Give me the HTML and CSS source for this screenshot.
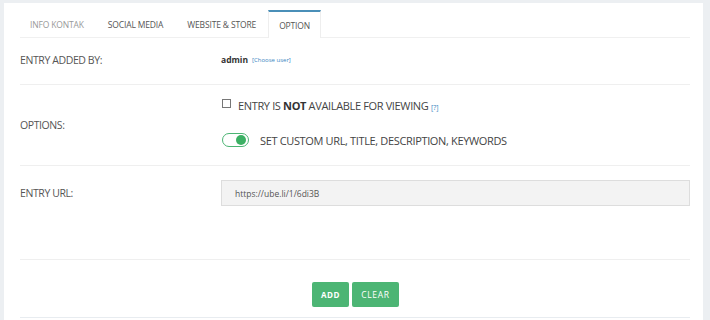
FILE: index.html
```html
<!DOCTYPE html>
<html>
<head>
<meta charset="utf-8">
<link rel="stylesheet" href="styles.css">
</head>
<body>
<div class="panel">
  <div class="tabs">
    <div class="tab muted">INFO KONTAK</div>
    <div class="tab">SOCIAL MEDIA</div>
    <div class="tab">WEBSITE &amp; STORE</div>
    <div class="tab active">OPTION</div>
  </div>
  <div class="row row-by">
    <div class="label">ENTRY ADDED BY:</div>
    <div class="value"><span class="admin">admin</span> <a class="choose">[Choose user]</a></div>
  </div>
  <div class="row row-opts">
    <div class="label">OPTIONS:</div>
    <div class="value opts">
      <div class="opt"><span class="box"></span><span>ENTRY IS <b>NOT</b> AVAILABLE FOR VIEWING <a class="help">[?]</a></span></div>
      <div class="opt"><span class="toggle"><span class="knob"></span></span><span>SET CUSTOM URL, TITLE, DESCRIPTION, KEYWORDS</span></div>
    </div>
  </div>
  <div class="row row-url">
    <div class="label">ENTRY URL:</div>
    <div class="value"><div class="input">https://ube.li/1/6di3B</div></div>
  </div>
  <div class="actions">
    <button class="btn add">ADD</button>
    <button class="btn clear">CLEAR</button>
  </div>
</div>
</body>
</html>
```
FILE: styles.css
```css
html, body { margin: 0; padding: 0; }
body {
  background: #eceff2;
  font-family: "Open Sans", "Liberation Sans", sans-serif;
  color: #555;
  width: 710px;
  height: 320px;
  overflow: hidden;
}
.panel {
  margin: 3px 7px 0 4px;
  background: #fff;
  padding: 7px 13px 0 16px;
  height: 320px;
  box-sizing: border-box;
}
.tabs {
  display: flex;
  height: 28px;
  border-bottom: 1px solid #f0f0f0;
  box-sizing: border-box;
}
.tab {
  font-size: 8.5px;
  letter-spacing: -0.15px;
  color: #555;
  padding: 0 12px;
  display: flex;
  align-items: center;
  box-sizing: border-box;
  border-top: 2px solid transparent;
}
.tab:first-child { padding-left: 10px; padding-right: 12px; }
.tab.muted { color: #999; }
.tab.active {
  border-top: 2px solid #4a8fb8;
  border-left: 1px solid #eee;
  border-right: 1px solid #eee;
  margin-bottom: -1px;
  background: #fff;
  padding: 0 10px;
}
.row {
  display: flex;
  border-bottom: 1px solid #efefef;
}
.label {
  width: 201px;
  font-size: 10.5px;
  color: #555;
  letter-spacing: -0.4px;
  display: flex;
  align-items: center;
}
.value { flex: 1; display: flex; align-items: center; }
.row-by { height: 46px; }
.row-by .label, .row-by .value { padding-bottom: 3px; }
.admin { font-size: 8.5px; font-weight: 700; color: #333; }
.choose { font-size: 6px; color: #3a86bf; margin-left: 4px; }
.row-opts { height: 80px; }
.opts { flex-direction: column; align-items: flex-start; justify-content: center; gap: 20px; padding-bottom: 5px; box-sizing: border-box; }
.opt { display: flex; align-items: center; font-size: 11px; color: #444; letter-spacing: -0.35px; }
.opt b { font-weight: 700; color: #333; }
.box {
  width: 7px; height: 7px;
  border: 1px solid #777;
  margin: 0 7px 0 1px;
  position: relative; top: -2px;
}
.help { font-size: 7px; color: #3a86bf; letter-spacing: 0; }
.toggle {
  width: 27px; height: 14px;
  border: 1px solid #4cb574;
  border-radius: 8px;
  box-sizing: border-box;
  margin: 0 11px 0 1px;
  display: flex; align-items: center; justify-content: flex-end;
  padding-right: 2px;
}
.knob { width: 10px; height: 10px; border-radius: 50%; background: #3cb064; }
.row-url { height: 93px; align-items: flex-start; }
.row-url .label { height: 25px; margin-top: 14px; }
.row-url .value { margin-top: 14px; }
.input {
  width: 100%;
  height: 26px;
  box-sizing: border-box;
  background: #f3f3f3;
  border: 1px solid #ddd;
  font-size: 8.5px;
  color: #555;
  padding-left: 13px;
  display: flex; align-items: center;
}
.actions {
  height: 58px;
  display: flex;
  justify-content: center;
  align-items: center;
  gap: 3px;
  border-bottom: 1px solid #e8ecf0;
  box-sizing: border-box;
  padding-top: 12px;
  padding-left: 1px;
}
.btn {
  height: 25px;
  border: none;
  border-radius: 2px;
  background: #4cb574;
  color: #fff;
  font-family: "Open Sans", "Liberation Sans", sans-serif;
  font-size: 8px;
  letter-spacing: 0.5px;
  padding: 0;
}
.add { width: 37px; font-weight: 700; }
.clear { width: 47px; font-size: 8.5px; letter-spacing: 0.7px; }
```
